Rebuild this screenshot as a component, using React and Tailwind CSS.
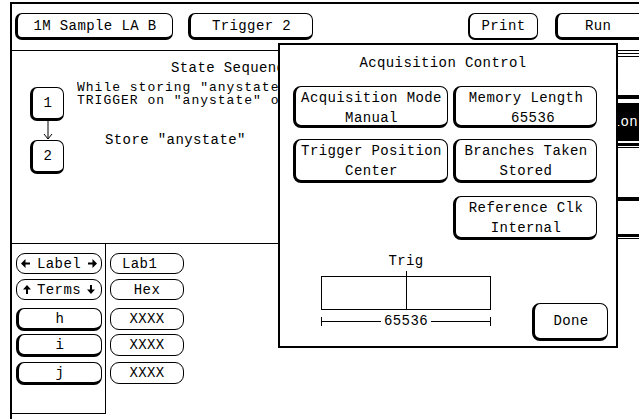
import React from 'react';

// HP logic analyzer "Trigger" screen with the Acquisition Control popup open
// - background: top menu bar, state sequence panel, label/terms table, right button column
// - popup drawn on top (absolute), like the instrument's overlay window

const raised = 'bg-white border-black border-t border-r border-l-[3px] border-b-[3px]';
const pill = 'bg-white border border-black rounded-[9px]';

const ArrowLeft = () => (
  <svg width="9" height="9" viewBox="0 0 9 9" className="shrink-0">
    <path d="M0 4.5 L4.5 0 L4.5 9 Z M4.5 3.5 H9 V5.5 H4.5 Z" fill="black" />
  </svg>
);

const ArrowRight = () => (
  <svg width="9" height="9" viewBox="0 0 9 9" className="shrink-0">
    <path d="M9 4.5 L4.5 0 L4.5 9 Z M0 3.5 H4.5 V5.5 H0 Z" fill="black" />
  </svg>
);

const ArrowUp = () => (
  <svg width="8" height="9" viewBox="0 0 8 9" className="shrink-0">
    <path d="M4 0 L8 4.5 L0 4.5 Z M3 4.5 H5 V9 H3 Z" fill="black" />
  </svg>
);

const ArrowDown = () => (
  <svg width="8" height="9" viewBox="0 0 8 9" className="shrink-0">
    <path d="M4 9 L8 4.5 L0 4.5 Z M3 0 H5 V4.5 H3 Z" fill="black" />
  </svg>
);

const StepBox = ({ n, className = '' }) => (
  <div className={`${raised} rounded-[7px] w-[34px] h-[34px] flex items-center justify-center shrink-0 ${className}`}>
    {n}
  </div>
);

const PopButton = ({ top, bottom, bottomClass = '', className = '' }) => (
  <div className={`${raised} rounded-[8px] flex flex-col items-center pt-[1px] leading-[20px] whitespace-nowrap shrink-0 ${className}`}>
    <div>{top}</div>
    <div className={bottomClass}>{bottom}</div>
  </div>
);

const App = () => {
  return (
    <div className="relative w-[639px] h-[419px] overflow-hidden bg-white text-black font-['Liberation_Mono','DejaVu_Sans_Mono',monospace] text-[14px] tracking-[0.4px] leading-none">
      <div className="ml-[10px] mt-[2px] h-[417px] border-l-2 border-t-2 border-black flex flex-col">
        {/* Top menu bar */}
        <div className="h-[47px] shrink-0 border-b border-black flex items-start pt-[9px]">
          <div className={`${raised} rounded-[7px] ml-[3px] w-[158px] h-[27px] shrink-0 flex items-center justify-center`}>
            1M Sample LA B
          </div>
          <div className={`${raised} rounded-[7px] ml-[15px] w-[125px] h-[27px] shrink-0 flex items-center justify-center`}>
            Trigger 2
          </div>
          <div className="ml-[155px] w-[70px] h-[27px] shrink-0 bg-white border border-black border-l-2 border-b-2 rounded-[7px] flex items-center justify-center">
            Print
          </div>
          <div className={`${raised} rounded-[7px] ml-[17px] w-[110px] h-[27px] shrink-0 flex items-center pl-[27px]`}>
            Run
          </div>
        </div>

        <div className="flex flex-1 min-h-0">
          {/* Left main column */}
          <div className="w-[605px] shrink-0 flex flex-col">
            {/* State sequence panel */}
            <div className="h-[193px] shrink-0 border-b border-black">
              <div className="mt-[10px] w-[266px] pl-[159px] leading-[14px] whitespace-nowrap overflow-hidden">State Sequence Levels</div>
              <div className="ml-[18px] mt-[6px]">
                <div className="flex items-start">
                  <StepBox n="1" className="mt-[6px]" />
                  <div className="ml-[13px] w-[202px] overflow-hidden text-[13px] tracking-[1px] leading-[13px] whitespace-nowrap">
                    <div>While storing "anystate" but not "anystate"</div>
                    <div>TRIGGER on "anystate" once</div>
                  </div>
                </div>
                <svg width="10" height="19" viewBox="0 0 10 19" className="block ml-[13px]">
                  <path d="M5 0 V18 M1 13 L5 18 L9 13" stroke="black" strokeWidth="1" fill="none" />
                </svg>
                <div className="flex items-start">
                  <StepBox n="2" />
                  <div className="ml-[41px] -mt-[7px] leading-[14px] whitespace-nowrap">Store "anystate"</div>
                </div>
              </div>
            </div>

            {/* Label / terms table */}
            <div className="flex flex-1 min-h-0">
              <div className="w-[94px] h-[170px] shrink-0 border-r border-b border-black pl-[4px] pt-[9px] flex flex-col">
                <div className={`${pill} w-[86px] h-[21px] flex items-center justify-between px-[4px]`}>
                  <ArrowLeft />
                  <span>Label</span>
                  <ArrowRight />
                </div>
                <div className={`${pill} mt-[5px] w-[86px] h-[21px] flex items-center justify-between px-[6px]`}>
                  <ArrowUp />
                  <span>Terms</span>
                  <ArrowDown />
                </div>
                <div className={`${raised} rounded-[8px] mt-[8px] w-[86px] h-[23px] flex items-center justify-center`}>h</div>
                <div className={`${raised} rounded-[8px] mt-[3px] w-[86px] h-[23px] flex items-center justify-center`}>i</div>
                <div className={`${raised} rounded-[8px] mt-[5px] w-[86px] h-[23px] flex items-center justify-center`}>j</div>
              </div>
              <div className="ml-[4px] pt-[9px] flex flex-col">
                <div className={`${pill} w-[74px] h-[21px] flex items-center pl-[11px]`}>Lab1</div>
                <div className={`${pill} mt-[5px] w-[74px] h-[21px] flex items-center justify-center`}>Hex</div>
                <div className={`${pill} mt-[8px] w-[74px] h-[22px] flex items-center justify-center`}>XXXX</div>
                <div className={`${pill} mt-[4px] w-[74px] h-[22px] flex items-center justify-center`}>XXXX</div>
                <div className={`${pill} mt-[6px] w-[74px] h-[22px] flex items-center justify-center`}>XXXX</div>
              </div>
            </div>
          </div>

          {/* Right button column (mostly behind the popup) */}
          <div className="flex-1 min-w-0 flex flex-col">
            <div className="mt-[2px] h-px bg-black" />
            <div className="mt-[2px] h-[42px] border-t border-b-[3px] border-black" />
            <div className="h-[48px] border-t border-b-[3px] border-black">
              <div className="mt-[4px] h-[38px] bg-black text-white flex items-center justify-end overflow-hidden pr-[1px] whitespace-nowrap">
                <span className="shrink-0">Acquisition</span>
              </div>
            </div>
            <div className="mt-[1px] h-[53px] border-t border-b-[3px] border-black" />
            <div className="h-[37px] border-t border-b-[3px] border-black" />
            <div className="mt-[1px] flex-1 border-t border-black" />
          </div>
        </div>
      </div>

      {/* Acquisition Control popup */}
      <div className="absolute left-[278px] top-[43px] w-[340px] h-[305px] border-2 border-black bg-white flex flex-col">
        <div className="mt-[11px] pr-[10px] leading-[14px] text-center">Acquisition Control</div>
        <div className="mt-[16px] pl-[13px] flex gap-[5px]">
          <PopButton top="Acquisition Mode" bottom="Manual" className="w-[155px] h-[42px]" />
          <PopButton top="Memory Length" bottom="65536" bottomClass="pl-[14px]" className="w-[144px] h-[42px]" />
        </div>
        <div className="mt-[11px] pl-[13px] flex gap-[5px]">
          <PopButton top="Trigger Position" bottom="Center" className="w-[155px] h-[44px]" />
          <PopButton top="Branches Taken" bottom="Stored" className="w-[144px] h-[44px]" />
        </div>
        <div className="mt-[13px] pl-[173px] flex">
          <PopButton top="Reference Clk" bottom="Internal" className="w-[144px] h-[44px]" />
        </div>
        <div className="mt-[14px] flex items-start">
          <div className="ml-[41px] w-[170px] flex flex-col items-center">
            <div className="leading-[14px]">Trig</div>
            <div className="mt-[3px] w-px h-[5px] bg-black" />
            <div className="w-full h-[34px] border border-black flex justify-center">
              <div className="w-px bg-black" />
            </div>
            <div className="mt-[5px] w-full h-[12px] flex items-center">
              <div className="w-px h-[9px] bg-black" />
              <div className="flex-1 h-px bg-black" />
              <span className="px-[3px] leading-[12px]">65536</span>
              <div className="flex-1 h-px bg-black" />
              <div className="w-px h-[9px] bg-black" />
            </div>
          </div>
          <div className={`${raised} rounded-[8px] ml-auto mr-[8px] mt-[49px] w-[76px] h-[38px] flex items-center justify-center`}>
            Done
          </div>
        </div>
      </div>
    </div>
  );
};

export default App;
